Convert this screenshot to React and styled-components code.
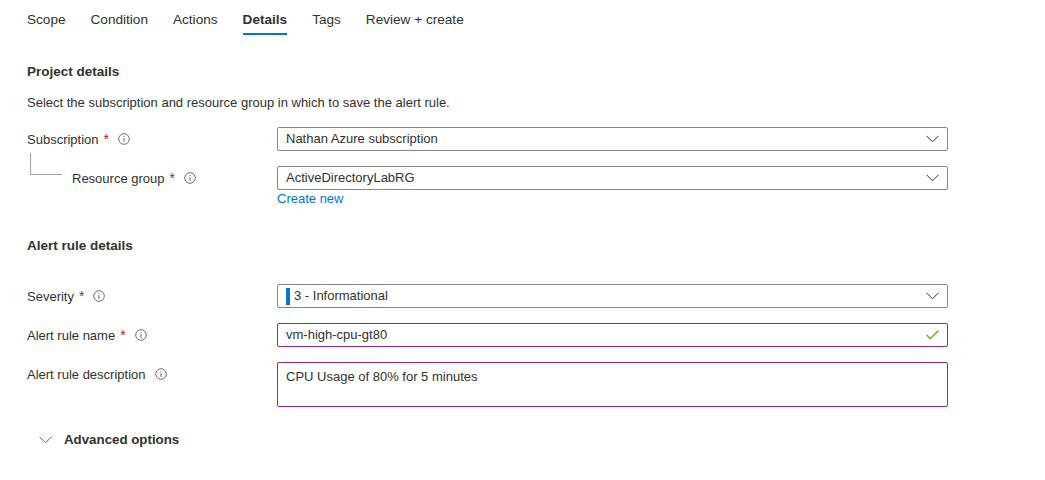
import React from 'react'
import styled, { createGlobalStyle } from 'styled-components'

const Global = createGlobalStyle`
  body {
    margin: 0;
    background: #fff;
    font-family: "Liberation Sans", Arial, sans-serif;
    font-size: 13px;
    color: #323130;
  }
`

const Page = styled.div`
  padding-left: 27px;
  width: 921px;
`

const TabBar = styled.div`
  display: flex;
  gap: 25px;
`

const Tab = styled.div`
  padding-top: 10px;
  padding-bottom: 3px;
  line-height: 20px;
  font-size: 13.6px;
  font-weight: ${p => (p.$active ? 700 : 400)};
  border-bottom: 2px solid ${p => (p.$active ? '#0078d4' : 'transparent')};
`

const Heading = styled.div`
  margin-top: ${p => p.$top}px;
  line-height: 20px;
  font-size: 13.5px;
  font-weight: 700;
`

const Text = styled.div`
  margin-top: 11px;
  line-height: 20px;
`

const Rows = styled.div`
  margin-top: ${p => p.$top}px;
  display: flex;
  flex-direction: column;
  gap: 15px;
`

const Row = styled.div`
  display: grid;
  grid-template-columns: 250px 671px;
  align-items: start;
`

const Label = styled.div`
  display: flex;
  align-items: center;
  height: 24px;
  white-space: nowrap;
`

const Connector = styled.span`
  align-self: flex-start;
  margin: -13px 10px 0 3px;
  width: 32px;
  height: 22px;
  border-left: 1px solid #a19f9d;
  border-bottom: 1px solid #a19f9d;
  box-sizing: border-box;
`

const Star = styled.span`
  color: #a4262c;
  margin-left: 5px;
  font-size: 14px;
`

const InfoWrap = styled.span`
  display: inline-flex;
  margin-left: 9px;
`

const Field = styled.div`
  box-sizing: border-box;
  height: ${p => p.$h || 24}px;
  border: 1px solid ${p => (p.$focus ? '#8a2da5' : '#8a8886')};
  border-radius: 2px;
  display: flex;
  align-items: ${p => (p.$multi ? 'flex-start' : 'center')};
  padding: ${p => (p.$multi ? '4px 8px 0 8px' : '0 8px')};
  line-height: 20px;
`

const Value = styled.span`
  flex: 1;
  display: flex;
  align-items: center;
`

const SevBar = styled.span`
  display: inline-block;
  width: 4px;
  height: 17px;
  background: #0078d4;
  margin-right: 4px;
`

const Link = styled.div`
  color: #0078d4;
  line-height: 16px;
  margin-top: 1px;
`

const Advanced = styled.div`
  margin-top: 23px;
  display: flex;
  align-items: center;
  line-height: 20px;
  font-size: 13.3px;
  font-weight: 700;
  padding-left: 12px;
  gap: 12px;
`

const Info = () => (
  <InfoWrap>
    <svg width="12" height="12" viewBox="0 0 12 12">
      <circle cx="6" cy="6" r="5.3" fill="none" stroke="#605e5c" strokeWidth="0.9" />
      <line x1="6" y1="5.2" x2="6" y2="8.8" stroke="#605e5c" strokeWidth="1" />
      <circle cx="6" cy="3.6" r="0.6" fill="#605e5c" />
    </svg>
  </InfoWrap>
)

const Chevron = ({ color = '#323130' }) => (
  <svg width="13" height="8" viewBox="0 0 13 8">
    <polyline points="0.5,0.8 6.5,6.8 12.5,0.8" fill="none" stroke={color} strokeWidth="1" />
  </svg>
)

const Check = () => (
  <svg width="13" height="10" viewBox="0 0 13 10">
    <polyline points="0.7,5 4.3,8.6 12.3,0.8" fill="none" stroke="#57a300" strokeWidth="1.2" />
  </svg>
)

const FieldLabel = ({ text, req, info = true, child }) => (
  <Label>
    {child && <Connector />}
    {text}
    {req && <Star>*</Star>}
    {info && <Info />}
  </Label>
)

export default function App() {
  const tabs = ['Scope', 'Condition', 'Actions', 'Details', 'Tags', 'Review + create']
  return (
    <Page>
      <Global />
      <TabBar>
        {tabs.map(t => (
          <Tab key={t} $active={t === 'Details'}>{t}</Tab>
        ))}
      </TabBar>

      <Heading $top={27}>Project details</Heading>
      <Text>Select the subscription and resource group in which to save the alert rule.</Text>

      <Rows $top={14}>
        <Row>
          <FieldLabel text="Subscription" req />
          <Field>
            <Value>Nathan Azure subscription</Value>
            <Chevron />
          </Field>
        </Row>
        <Row>
          <FieldLabel text="Resource group" req child />
          <div>
            <Field>
              <Value>ActiveDirectoryLabRG</Value>
              <Chevron />
            </Field>
            <Link>Create new</Link>
          </div>
        </Row>
      </Rows>

      <Heading $top={29}>Alert rule details</Heading>

      <Rows $top={28}>
        <Row>
          <FieldLabel text="Severity" req />
          <Field>
            <Value><SevBar />3 - Informational</Value>
            <Chevron />
          </Field>
        </Row>
        <Row>
          <FieldLabel text="Alert rule name" req />
          <Field $focus>
            <Value>vm-high-cpu-gt80</Value>
            <Check />
          </Field>
        </Row>
        <Row>
          <FieldLabel text="Alert rule description" />
          <Field $focus $multi $h={45}>
            <Value>CPU Usage of 80% for 5 minutes</Value>
          </Field>
        </Row>
      </Rows>

      <Advanced>
        <Chevron color="#605e5c" />
        Advanced options
      </Advanced>
    </Page>
  )
}
